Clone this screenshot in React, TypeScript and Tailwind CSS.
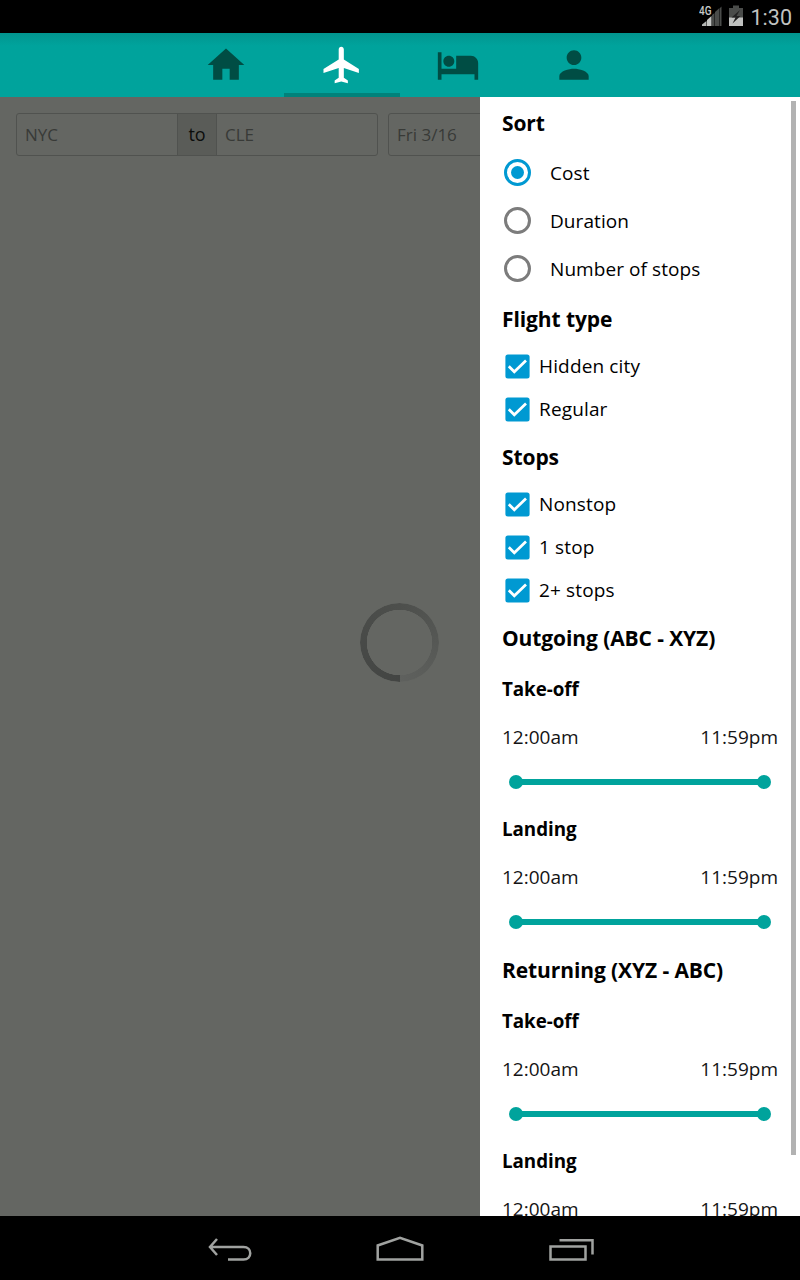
import type { ReactNode } from "react";

const TABS = [
  { name: "Home", d: "M10 20v-6h4v6h5v-8h3L12 3 2 12h3v8z" },
  {
    name: "Flights",
    d: "M21.2 16.3v-2.1L13 9V3.500c0-.83-.6-1.500-1.400-1.500s-1.400.67-1.400 1.500V9l-8.300 5.200v2.100l8.300-2.600v5.200l-2.200 1.600v1.500l3.600-1 3.600 1v-1.500l-2.200-1.600v-5.200z",
  },
  {
    name: "Hotels",
    d: "M7 13c1.66 0 3-1.34 3-3S8.66 7 7 7s-3 1.34-3 3 1.34 3 3 3zm12-6h-8v7H3V5H1v15h2v-3h18v3h2v-9c0-2.21-1.79-4-4-4z",
  },
  {
    name: "Account",
    d: "M12 12c2.21 0 4-1.79 4-4s-1.79-4-4-4-4 1.79-4 4 1.79 4 4 4zm0 2c-2.67 0-8 1.34-8 4v2h16v-2c0-2.66-5.33-4-8-4z",
  },
];

function StatusBar() {
  return (
    <div className="flex h-[33px] shrink-0 items-center justify-end bg-black pr-2">
      <svg width="52" height="33" viewBox="0 0 52 33">
        <g fill="#4a4c4a">
          <path d="M16 12l4.500-4V26H16z" />
          <path d="M21 8l1.500-1.500V26H21z" />
        </g>
        <path d="M3 26v-1.500L7.500 21v5z" fill="#b4b6b4" />
        <path d="M8 20l4.500-4v10H8z" fill="#c4c6c4" />
        <path d="M13 15l2.500-2v13H13z" fill="#4a4c4a" />
        <text x="0" y="15" fontFamily="Roboto, sans-serif" fontSize="12" fontWeight="500" fill="#c8cac8" textLength="12.500" lengthAdjust="spacingAndGlyphs">4G</text>
        <path d="M30 8h4V5.500h6V8h4v18H30z" fill="#4a4c4a" />
        <path d="M30 17.500h14V26H30z" fill="#bfc1bf" />
        <path d="M41 10l-8.500 7.500h4l-3 6 8-7.500h-4z" fill="#222" />
      </svg>
      <span className="mt-0.5 font-[Roboto,sans-serif] text-[21.5px] leading-none text-[#c0c2c0]">1:30</span>
    </div>
  );
}

function TabBar() {
  return (
    <nav className="flex h-16 shrink-0 justify-center bg-linear-to-b from-[#02958f] via-[#00a39c] via-20% to-[#00a39c]">
      {TABS.map((tab) => (
        <button
          key={tab.name}
          aria-label={tab.name}
          className={
            tab.name === "Flights"
              ? "flex w-[116px] items-center justify-center border-b-4 border-[#00827a] pt-1 text-white"
              : "flex w-[116px] items-center justify-center text-[#004d44]"
          }
        >
          <svg width="44" height="44" viewBox="0 0 24 24" fill="currentColor">
            <path d={tab.d} />
          </svg>
        </button>
      ))}
    </nav>
  );
}

function Heading({ children }: { children: ReactNode }) {
  return (
    <h2 className="flex h-[52px] items-center pt-0.5 text-[21px] font-bold tracking-[-0.1px]">{children}</h2>
  );
}

function RadioRow({ label, checked = false }: { label: string; checked?: boolean }) {
  return (
    <div className="flex h-12 items-center pl-0.5 tracking-[0.08px]">
      <span
        className={
          checked
            ? "mb-px mr-[19px] flex size-[27px] items-center justify-center rounded-full border-[3px] border-[#0099d2]"
            : "mb-px mr-[19px] size-[27px] rounded-full border-[3px] border-[#7c7c7c]"
        }
      >
        {checked && <span className="size-[13px] rounded-full bg-[#0099d2]" />}
      </span>
      {label}
    </div>
  );
}

function CheckRow({ label }: { label: string }) {
  return (
    <div className="flex h-[43px] items-center pl-[3px] tracking-[0.15px]">
      <svg className="mr-[9px]" width="25" height="25" viewBox="0 0 25 25" fill="none">
        <rect x="0.400" y="0.400" width="24.200" height="24.200" rx="2.500" fill="#0099d2" />
        <path d="M3.800 12.300l5.500 5.500L21 6.500" stroke="white" strokeWidth="2.700" />
      </svg>
      {label}
    </div>
  );
}

function TimeRange({ title }: { title: string }) {
  return (
    <section>
      <h3 className="flex h-[50px] items-center text-[18.8px] font-bold tracking-[-0.05px]">{title}</h3>
      <div className="flex h-[46px] items-center justify-between text-[#141414]">
        <span>12:00am</span>
        <span>11:59pm</span>
      </div>
      <div className="flex h-11 items-center px-[7px]">
        <span className="size-3.5 rounded-full bg-[#00a39c]" />
        <span className="-mx-1 h-1.5 grow bg-[#00a39c]" />
        <span className="size-3.5 rounded-full bg-[#00a39c]" />
      </div>
    </section>
  );
}

function FilterDrawer() {
  return (
    <aside className="absolute inset-y-0 right-0 w-80 overflow-hidden bg-white px-[22px] text-[19px] text-black">
      <Heading>Sort</Heading>
      <RadioRow label="Cost" checked />
      <RadioRow label="Duration" />
      <RadioRow label="Number of stops" />
      <Heading>Flight type</Heading>
      <CheckRow label="Hidden city" />
      <CheckRow label="Regular" />
      <Heading>Stops</Heading>
      <CheckRow label="Nonstop" />
      <CheckRow label="1 stop" />
      <CheckRow label="2+ stops" />
      <Heading>Outgoing (ABC - XYZ)</Heading>
      <TimeRange title="Take-off" />
      <TimeRange title="Landing" />
      <Heading>Returning (XYZ - ABC)</Heading>
      <TimeRange title="Take-off" />
      <TimeRange title="Landing" />
      <div className="absolute right-1 top-1 h-[1054px] w-[5px] bg-[#b2b2b2]" />
    </aside>
  );
}

function SearchFields() {
  return (
    <div className="flex gap-2.5 px-4 pt-4 text-[17px] text-[#383a37]">
      <div className="flex h-[43px] w-[362px] shrink-0 rounded-[3px] border border-[#50524f]">
        <span className="flex w-40 items-center pl-2">NYC</span>
        <span className="flex w-10 items-center justify-center border-x border-[#50524f] bg-[#5a5c58] text-[18px] text-[#0c0d0c]">to</span>
        <span className="flex items-center pl-2">CLE</span>
      </div>
      <div className="flex h-[43px] grow items-center rounded-[3px] border border-[#50524f] pl-2">Fri 3/16</div>
    </div>
  );
}

function SystemNav() {
  return (
    <div className="flex h-16 shrink-0 items-center justify-center bg-black">
      <svg width="420" height="64" viewBox="190 1216 420 64" fill="none" stroke="#a0a2a0" strokeWidth="2.500">
        <path d="M217 1239l-7 8 7 8M210 1247h33.500c9 0 9 12.500 0 12.500H228" />
        <path d="M377.700 1259.500v-14l22.300-7.700 22.300 7.700v14z" />
        <path d="M550.500 1246.500h35v13h-35zM559.500 1240.200h33v14.300" />
      </svg>
    </div>
  );
}

export default function App() {
  return (
    <div className="flex h-[1280px] w-[800px] flex-col overflow-hidden font-['Open_Sans',sans-serif]">
      <StatusBar />
      <TabBar />
      <main className="relative grow overflow-hidden bg-[#646662]">
        <SearchFields />
        <div className="absolute left-[360px] top-[506px] size-[79px] rounded-full bg-[conic-gradient(from_180deg,#434543,#4d4f4c_50%,#5f615e)] mask-[radial-gradient(circle,transparent_32.5px,black_33px)]" />
        <FilterDrawer />
      </main>
      <SystemNav />
    </div>
  );
}
